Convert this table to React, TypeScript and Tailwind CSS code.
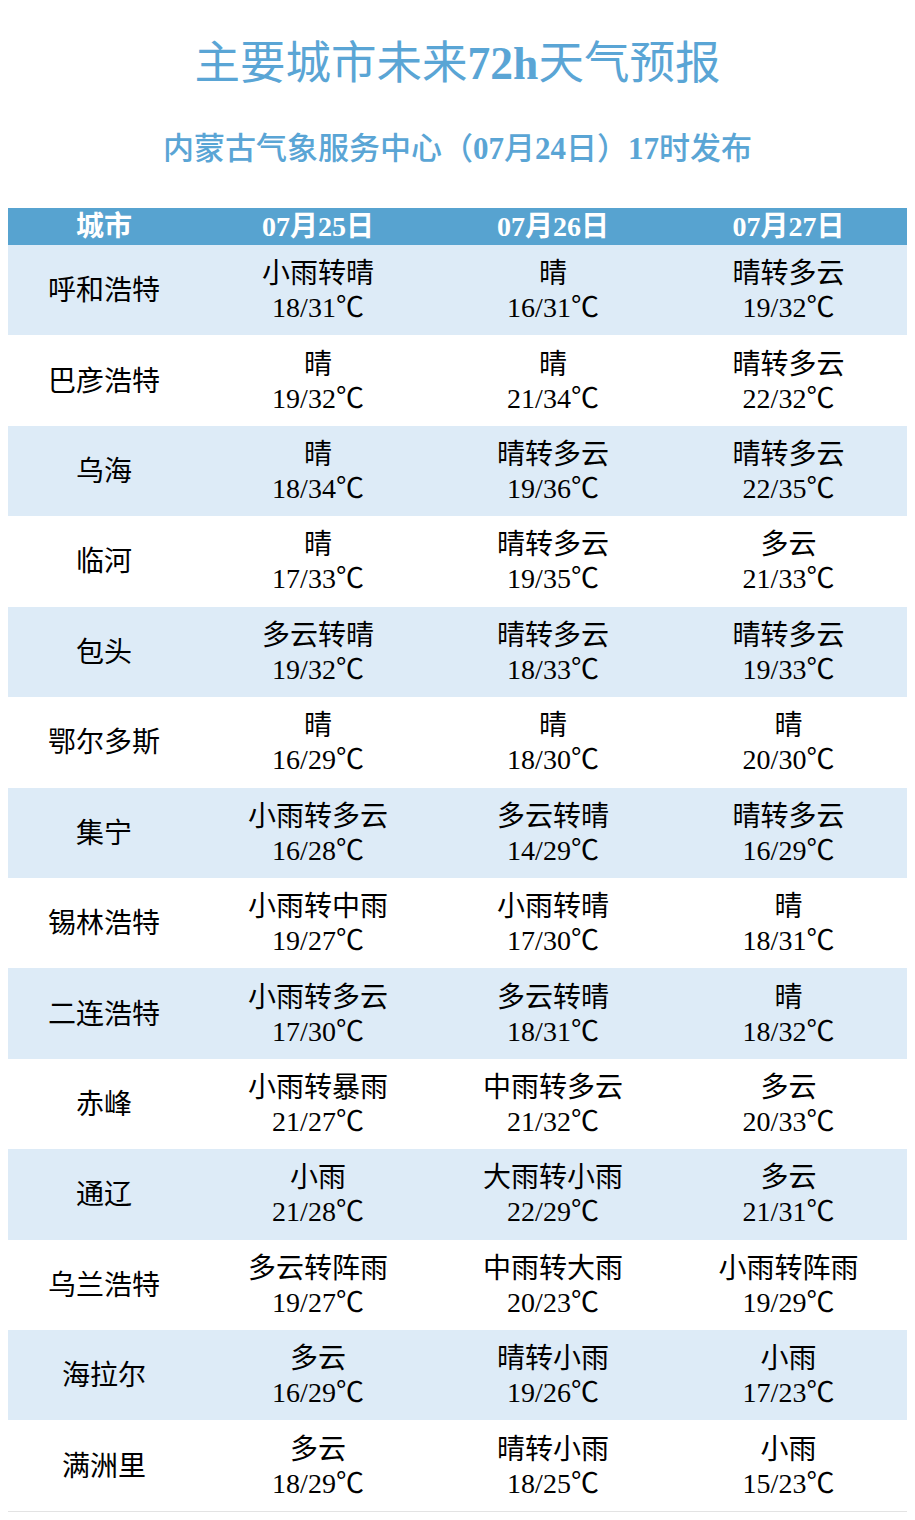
import React from "react";

const rows: [string, string, string, string, string, string, string][] = [
  ["呼和浩特", "小雨转晴", "18/31℃", "晴", "16/31℃", "晴转多云", "19/32℃"],
  ["巴彦浩特", "晴", "19/32℃", "晴", "21/34℃", "晴转多云", "22/32℃"],
  ["乌海", "晴", "18/34℃", "晴转多云", "19/36℃", "晴转多云", "22/35℃"],
  ["临河", "晴", "17/33℃", "晴转多云", "19/35℃", "多云", "21/33℃"],
  ["包头", "多云转晴", "19/32℃", "晴转多云", "18/33℃", "晴转多云", "19/33℃"],
  ["鄂尔多斯", "晴", "16/29℃", "晴", "18/30℃", "晴", "20/30℃"],
  ["集宁", "小雨转多云", "16/28℃", "多云转晴", "14/29℃", "晴转多云", "16/29℃"],
  ["锡林浩特", "小雨转中雨", "19/27℃", "小雨转晴", "17/30℃", "晴", "18/31℃"],
  ["二连浩特", "小雨转多云", "17/30℃", "多云转晴", "18/31℃", "晴", "18/32℃"],
  ["赤峰", "小雨转暴雨", "21/27℃", "中雨转多云", "21/32℃", "多云", "20/33℃"],
  ["通辽", "小雨", "21/28℃", "大雨转小雨", "22/29℃", "多云", "21/31℃"],
  ["乌兰浩特", "多云转阵雨", "19/27℃", "中雨转大雨", "20/23℃", "小雨转阵雨", "19/29℃"],
  ["海拉尔", "多云", "16/29℃", "晴转小雨", "19/26℃", "小雨", "17/23℃"],
  ["满洲里", "多云", "18/29℃", "晴转小雨", "18/25℃", "小雨", "15/23℃"],
];

const font = { fontFamily: '"Liberation Serif", "Noto Sans CJK SC", serif' };

function Cell({ w, t }: { w: string; t: string }) {
  return (
    <div className="flex flex-col items-center justify-center text-[28px] leading-[34px] text-black">
      <div>{w}</div>
      <div>{t}</div>
    </div>
  );
}

export default function App() {
  return (
    <div className="w-[915px] bg-white pb-[10px] font-['Liberation_Serif','Noto_Sans_CJK_SC',serif]" style={font}>
      <div className="pt-[41px] text-center text-[45.5px] leading-[46px] text-[#5aa5d5]">
        主要城市未来<span className="font-bold">72h</span>天气预报
      </div>
      <div className="mt-[46px] text-center text-[31px] font-medium leading-[32px] text-[#5aa5d5]">
        内蒙古气象服务中心（<span className="font-bold">07</span>月<span className="font-bold">24</span>日）<span className="font-bold">17</span>时发布
      </div>
      <div className="mx-[8px] mt-[43px] border-b border-[#e3e3e3]">
        <div className="grid h-[37px] grid-cols-[192px_236px_234px_237px] items-center bg-[#57a3d0] text-[28px] font-bold leading-[37px] text-white">
          <div className="text-center">城市</div>
          <div className="text-center">07月25日</div>
          <div className="text-center">07月26日</div>
          <div className="text-center">07月27日</div>
        </div>
        {rows.map((r, i) => (
          <div
            key={r[0]}
            className={`grid h-[90.43px] grid-cols-[192px_236px_234px_237px] items-center pt-[2px] ${
              i % 2 === 0 ? "bg-[#ddebf7]" : "bg-white"
            }`}
          >
            <div className="text-center text-[28px] leading-[34px] text-black">{r[0]}</div>
            <Cell w={r[1]} t={r[2]} />
            <Cell w={r[3]} t={r[4]} />
            <Cell w={r[5]} t={r[6]} />
          </div>
        ))}
      </div>
    </div>
  );
}
